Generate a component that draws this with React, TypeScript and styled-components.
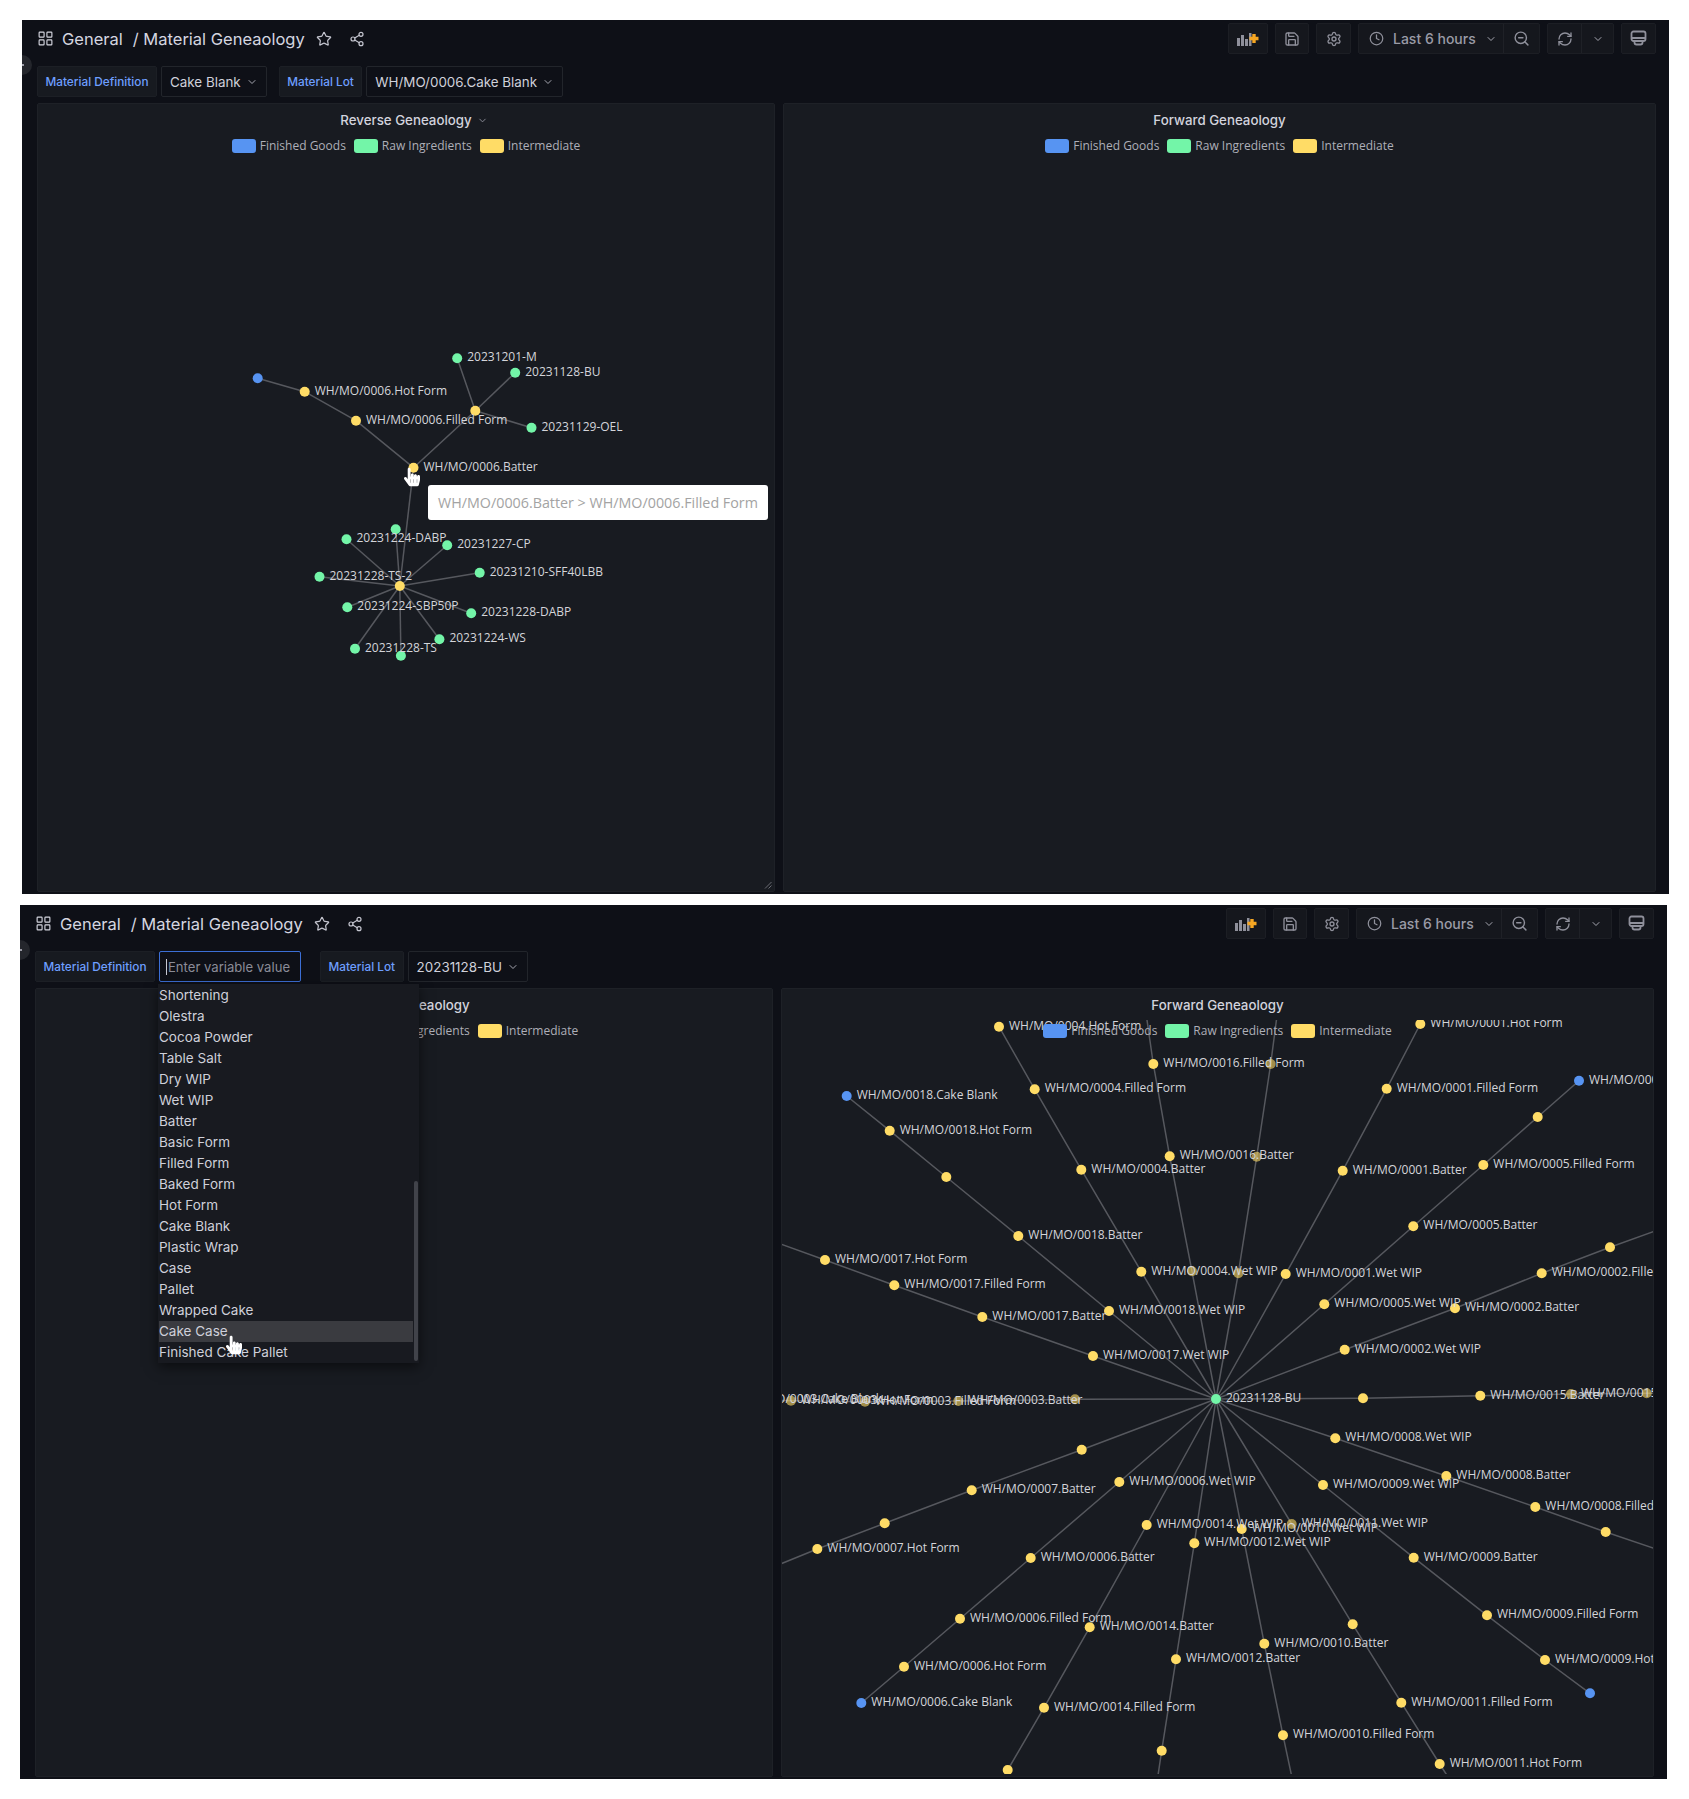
import React from 'react';
import styled, { createGlobalStyle } from 'styled-components';
import {
  ChevronDown,
  Clock,
  LayoutGrid,
  RefreshCw,
  Save,
  Settings,
  Share2,
  Star,
  ZoomOut,
} from 'lucide-react';
import { FaHandPointer } from 'react-icons/fa';

const GlobalStyle = createGlobalStyle`
  html, body {
    margin: 0;
    background: #ffffff;
  }

  body {
    font-family: Inter, "Liberation Sans", sans-serif;
  }
`;

const Page = styled.div`
  display: flex;
  flex-direction: column;
  gap: 11px;
  width: 1689px;
  height: 1799px;
  padding-top: 20px;
  box-sizing: border-box;
`;

const Frame = styled.div<{ $left: number }>`
  position: relative;
  overflow: hidden;
  display: flex;
  flex-direction: column;
  box-sizing: border-box;
  width: 1647px;
  height: 874px;
  margin-left: ${({ $left }) => $left}px;
  padding: 3px 13px 2px 15px;
  background: #0e1017;
`;

const SideToggle = styled.div`
  position: absolute;
  left: -10px;
  top: 35px;
  width: 20px;
  height: 20px;
  border-radius: 50%;
  background: #24262c;

  &::after {
    content: '';
    position: absolute;
    left: 10px;
    top: 9px;
    width: 2px;
    height: 2px;
    background: #9a9aa5;
  }
`;

const TopBar = styled.div`
  display: flex;
  align-items: center;
  justify-content: space-between;
  height: 31px;
`;

const Breadcrumb = styled.div`
  display: flex;
  align-items: center;
  color: #d5d6e0;
  font-size: 16.5px;
  font-weight: 400;
`;

const Crumb = styled.span`
  margin-left: 8px;
`;

const CrumbTail = styled.span`
  margin: 0 11px 0 10px;
`;

const TitleAction = styled.span`
  display: flex;
  margin-right: 17px;
  color: #c4c5cf;
`;

const Toolbar = styled.div`
  display: flex;
  gap: 7px;
`;

const ToolGroup = styled.div`
  display: flex;
  height: 31px;
  box-sizing: border-box;
  border: 1px solid #1c1e24;
  border-radius: 2px;
  background: #15171d;
`;

const ToolCell = styled.div<{ $width: number; $divided?: boolean }>`
  display: flex;
  align-items: center;
  justify-content: center;
  width: ${({ $width }) => $width}px;
  color: #8f909b;
  border-left: ${({ $divided }) => ($divided ? '1px solid #1f2127' : '0')};
`;

const TimeCell = styled(ToolCell)`
  justify-content: flex-start;
  box-sizing: border-box;
  padding-left: 10px;
`;

const TimeText = styled.span`
  margin: 0 9px 0 9px;
  color: #9a9ba6;
  font-size: 14px;
  font-weight: 500;
`;

const VariableRow = styled.div`
  display: flex;
  align-items: stretch;
  height: 31px;
  margin-top: 12px;
`;

const VariableLabel = styled.div<{ $gapLeft: number }>`
  display: flex;
  align-items: center;
  box-sizing: border-box;
  margin-left: ${({ $gapLeft }) => $gapLeft}px;
  padding: 0 7.5px;
  border: 1px solid #1c1f25;
  border-radius: 2px;
  background: #171a20;
  color: #6e9fff;
  font-size: 11.8px;
  font-weight: 500;
`;

const VariableValue = styled.div`
  display: flex;
  align-items: center;
  gap: 5px;
  box-sizing: border-box;
  margin-left: 4px;
  padding: 0 8px 0 8px;
  border: 1px solid #22252b;
  border-radius: 2px;
  background: #0e1017;
  color: #d0d1db;
  font-size: 13.4px;
`;

const Chevron = styled(ChevronDown)`
  flex: none;
  color: #a5a6b0;
`;

const VariableInputWrap = styled.div`
  position: relative;
  margin-left: 4px;
`;

const VariableInput = styled.input`
  display: block;
  box-sizing: border-box;
  width: 142px;
  height: 31px;
  padding: 0 0 0 8px;
  border: 1px solid #3c6fd6;
  border-radius: 2px;
  outline: none;
  background: #0e1017;
  color: #d0d1db;
  font: 13.1px Inter, sans-serif;

  &::placeholder {
    color: #8b8c97;
    opacity: 1;
  }
`;

const Caret = styled.span`
  position: absolute;
  left: 7px;
  top: 8px;
  width: 1px;
  height: 16px;
  background: #c8c9d3;
`;

const OptionList = styled.ul`
  position: absolute;
  z-index: 5;
  left: -1px;
  top: 33px;
  width: 261px;
  height: 379px;
  margin: 0;
  padding: 0.5px 0 0 1px;
  box-sizing: border-box;
  list-style: none;
  background: #181a20;
  box-shadow: 0 4px 12px rgba(0, 0, 0, 0.55);
`;

const Option = styled.li<{ $active?: boolean }>`
  width: 254px;
  height: 21px;
  line-height: 21px;
  color: #cfd0da;
  font-size: 13.5px;
  background: ${({ $active }) => ($active ? '#3a3b40' : 'transparent')};
`;

const ScrollThumb = styled.span`
  position: absolute;
  right: 1px;
  bottom: 2px;
  width: 4px;
  height: 180px;
  border-radius: 2px;
  background: #41434a;
`;

const Pointer = styled(FaHandPointer)<{ $left: number; $top: number }>`
  position: absolute;
  z-index: 6;
  left: ${({ $left }) => $left}px;
  top: ${({ $top }) => $top}px;
  width: 16px;
  height: 22px;
  color: #ffffff;
`;

const Panels = styled.div`
  display: grid;
  flex: 1;
  grid-template-columns: 738px 873px;
  gap: 8px;
  margin-top: 6px;
  min-height: 0;
`;

const Panel = styled.section`
  position: relative;
  overflow: hidden;
  border: 1px solid #1e2127;
  border-radius: 2px;
  background: #181b21;
`;

const PanelHead = styled.header`
  position: relative;
  z-index: 2;
  display: flex;
  flex-direction: column;
  align-items: center;
  padding-top: 7.5px;
`;

const PanelTitle = styled.h3`
  position: relative;
  margin: 0;
  color: #d2d3dd;
  font-size: 13.3px;
  font-weight: 500;
  line-height: 17px;
`;

const TitleChevron = styled(ChevronDown)`
  position: absolute;
  left: calc(100% + 5px);
  top: 3px;
  color: #8f909b;
`;

const Legend = styled.ul`
  display: flex;
  align-items: center;
  margin: 8.5px 0 0;
  padding: 0;
  list-style: none;
`;

const LegendItem = styled.li`
  display: flex;
  align-items: center;
  gap: 4px;
  margin: 0 4px;
  color: #aeafb8;
  font-family: 'Open Sans', sans-serif;
  font-size: 12px;
`;

const Swatch = styled.span<{ $color: string }>`
  width: 24px;
  height: 14px;
  border-radius: 3px;
  background: ${({ $color }) => $color};
`;

const GraphCanvas = styled.svg`
  position: absolute;
  left: 0;
  top: 31px;
  width: 100%;
  height: calc(100% - 33px);
`;

const Edge = styled.polyline`
  fill: none;
  stroke: #56585e;
  stroke-width: 1.5;
`;

const NodeDot = styled.circle<{ $kind: NodeKind }>`
  fill: ${({ $kind }) => NODE_COLORS[$kind]};
  opacity: ${({ $kind }) => ($kind === 'ghost' ? 0.6 : 1)};
`;

const NodeLabel = styled.text`
  fill: #d4d5da;
  font-family: 'Open Sans', sans-serif;
  font-size: 12px;
  dominant-baseline: central;
`;

const Tooltip = styled.div`
  position: absolute;
  z-index: 3;
  left: 390px;
  top: 381px;
  display: flex;
  align-items: center;
  box-sizing: border-box;
  width: 340px;
  height: 35px;
  padding-left: 10px;
  border-radius: 3px;
  background: #ffffff;
  color: #a3a3a3;
  font-family: 'Open Sans', sans-serif;
  font-size: 14.3px;
  white-space: nowrap;
`;

const ResizeMark = styled.svg`
  position: absolute;
  right: 2px;
  bottom: 2px;
  color: #6b6d75;
`;

type NodeKind = 'yellow' | 'green' | 'blue' | 'ghost' | 'none';

const NODE_COLORS: Record<NodeKind, string> = {
  yellow: '#ffdc66',
  green: '#73f5a8',
  blue: '#5794f2',
  ghost: '#ffdc66',
  none: 'transparent',
};

type GraphNode = { x: number; y: number; label?: string; kind: NodeKind };

const at = (x: number, y: number, label?: string, kind: NodeKind = 'yellow'): GraphNode => ({
  x,
  y,
  label,
  kind,
});
const end = (x: number, y: number) => at(x, y, undefined, 'none');
const ghost = (x: number, y: number, label?: string) => at(x, y, label, 'ghost');
const raw = (x: number, y: number, label?: string) => at(x, y, label, 'green');
const blue = (x: number, y: number, label?: string) => at(x, y, label, 'blue');

const MO = 'WH/MO/';

const REVERSE_BATTER = at(413.5, 467.7, `${MO}0006.Batter`);
const REVERSE_MIX = at(475.3, 410.7);
const REVERSE_WIP = at(399.8, 586);

const REVERSE_CHAINS: GraphNode[][] = [
  [
    REVERSE_BATTER,
    at(356, 420.7, `${MO}0006.Filled Form`),
    at(304.7, 391.7, `${MO}0006.Hot Form`),
    blue(257.7, 378.3),
  ],
  [REVERSE_BATTER, REVERSE_MIX, raw(457.2, 358.3, '20231201-M')],
  [REVERSE_MIX, raw(515.2, 372.7, '20231128-BU')],
  [REVERSE_MIX, raw(531.5, 427.7, '20231129-OEL')],
  [REVERSE_BATTER, REVERSE_WIP],
  [REVERSE_WIP, raw(395.7, 529.3)],
  [REVERSE_WIP, raw(346.5, 539.3, '20231224-DABP')],
  [REVERSE_WIP, raw(447.2, 545.3, '20231227-CP')],
  [REVERSE_WIP, raw(319.5, 576.7, '20231228-TS-2')],
  [REVERSE_WIP, raw(479.7, 572.7, '20231210-SFF40LBB')],
  [REVERSE_WIP, raw(347.3, 607.3, '20231224-SBP50P')],
  [REVERSE_WIP, raw(471.2, 613.3, '20231228-DABP')],
  [REVERSE_WIP, raw(439.4, 639.3, '20231224-WS')],
  [REVERSE_WIP, raw(355, 648.7, '20231228-TS')],
  [REVERSE_WIP, raw(400.9, 655.7)],
];

const HUB = raw(1216, 1399, '20231128-BU');

const FORWARD_CHAINS: GraphNode[][] = [
  [
    HUB,
    at(1141.3, 1271.7, `${MO}0004.Wet WIP`),
    at(1081.3, 1169.7, `${MO}0004.Batter`),
    at(1034.7, 1089.3, `${MO}0004.Filled Form`),
    at(999, 1026.7, `${MO}0004.Hot Form`),
  ],
  [
    HUB,
    ghost(1192, 1271.3),
    at(1169.7, 1156.3, `${MO}0016.Batter`),
    at(1153.3, 1064, `${MO}0016.Filled Form`),
    end(1146.7, 1018),
  ],
  [
    HUB,
    ghost(1238.3, 1273.3),
    ghost(1256.7, 1156.7),
    ghost(1270.7, 1064),
    end(1276.7, 1018),
  ],
  [
    HUB,
    at(1285.7, 1274, `${MO}0001.Wet WIP`),
    at(1342.7, 1170.7, `${MO}0001.Batter`),
    at(1386.7, 1088.7, `${MO}0001.Filled Form`),
    at(1420.3, 1024, `${MO}0001.Hot Form`),
  ],
  [
    HUB,
    at(1324.3, 1304.3, `${MO}0005.Wet WIP`),
    at(1413.3, 1226.3, `${MO}0005.Batter`),
    at(1483.3, 1165, `${MO}0005.Filled Form`),
    at(1537.7, 1117),
    blue(1579, 1080.7, `${MO}0005.Cake Blank`),
  ],
  [
    HUB,
    at(1344.7, 1349.7, `${MO}0002.Wet WIP`),
    at(1455, 1308.3, `${MO}0002.Batter`),
    at(1541.7, 1273.3, `${MO}0002.Filled Form`),
    at(1610, 1247.3),
    end(1656, 1230.7),
  ],
  [
    HUB,
    at(1363, 1398.3),
    at(1480.3, 1395.7, `${MO}0015.Batter`),
    ghost(1571, 1394, `${MO}0015.Filled Form`),
    ghost(1646.7, 1393.3),
    end(1660, 1393),
  ],
  [
    HUB,
    at(1335.3, 1438.3, `${MO}0008.Wet WIP`),
    at(1446.3, 1476, `${MO}0008.Batter`),
    at(1535.3, 1507, `${MO}0008.Filled Form`),
    at(1605.7, 1532),
    end(1656, 1549),
  ],
  [
    HUB,
    at(1323, 1485, `${MO}0009.Wet WIP`),
    at(1413.7, 1557.7, `${MO}0009.Batter`),
    at(1487, 1615.3, `${MO}0009.Filled Form`),
    at(1545, 1660, `${MO}0009.Hot Form`),
    blue(1590, 1693.3),
  ],
  [
    HUB,
    ghost(1291.7, 1524, `${MO}0011.Wet WIP`),
    at(1352.7, 1624.3),
    at(1401.3, 1702.7, `${MO}0011.Filled Form`),
    at(1439.7, 1764, `${MO}0011.Hot Form`),
    end(1450, 1780),
  ],
  [
    HUB,
    at(1241.7, 1529, `${MO}0010.Wet WIP`),
    at(1264.3, 1643.7, `${MO}0010.Batter`),
    at(1283, 1735.3, `${MO}0010.Filled Form`),
    end(1292.5, 1780),
  ],
  [
    HUB,
    at(1194.3, 1543.3, `${MO}0012.Wet WIP`),
    at(1176, 1659.3, `${MO}0012.Batter`),
    at(1161.7, 1750.7),
    end(1157.3, 1780),
  ],
  [
    HUB,
    at(1146.7, 1525, `${MO}0014.Wet WIP`),
    at(1089.7, 1627.3, `${MO}0014.Batter`),
    at(1044, 1707.7, `${MO}0014.Filled Form`),
    at(1007.7, 1770),
    end(1001, 1780),
  ],
  [
    HUB,
    at(1119.3, 1482, `${MO}0006.Wet WIP`),
    at(1030.7, 1558, `${MO}0006.Batter`),
    at(960, 1618.7, `${MO}0006.Filled Form`),
    at(904, 1666.7, `${MO}0006.Hot Form`),
    blue(861.3, 1703, `${MO}0006.Cake Blank`),
  ],
  [
    HUB,
    at(1081.7, 1449.7),
    at(971.7, 1490.3, `${MO}0007.Batter`),
    at(884.7, 1523.3),
    at(817.3, 1549, `${MO}0007.Hot Form`),
    end(778, 1565),
  ],
  [
    HUB,
    ghost(1075, 1399.3),
    ghost(958.3, 1401, `${MO}0003.Batter`),
    ghost(865, 1401.7, `${MO}0003.Filled Form`),
    ghost(791, 1400.7, `${MO}0003.Hot Form`),
    at(731, 1400, `${MO}0003.Cake Blank`),
  ],
  [
    HUB,
    at(1093, 1356, `${MO}0017.Wet WIP`),
    at(982.3, 1317, `${MO}0017.Batter`),
    at(894.3, 1285.3, `${MO}0017.Filled Form`),
    at(825, 1260, `${MO}0017.Hot Form`),
    end(778, 1243),
  ],
  [
    HUB,
    at(1109, 1311, `${MO}0018.Wet WIP`),
    at(1018.3, 1236, `${MO}0018.Batter`),
    at(946.3, 1177),
    at(889.7, 1130.7, `${MO}0018.Hot Form`),
    blue(846.7, 1096, `${MO}0018.Cake Blank`),
  ],
];

const Graph = ({
  chains,
  originX,
  originY,
}: {
  chains: GraphNode[][];
  originX: number;
  originY: number;
}) => {
  const nodes = Array.from(new Set(chains.flat()));
  return (
    <GraphCanvas>
      <g transform={`translate(${-originX} ${-originY})`}>
        {chains.map((chain, i) => (
          <Edge key={i} points={chain.map((p) => `${p.x},${p.y}`).join(' ')} />
        ))}
        {nodes.map((node, i) => (
          <NodeDot key={i} cx={node.x} cy={node.y} r={5} $kind={node.kind} />
        ))}
        {nodes.map((node, i) =>
          node.label ? (
            <NodeLabel key={i} x={node.x + 10} y={node.y - 1.5}>
              {node.label}
            </NodeLabel>
          ) : null,
        )}
      </g>
    </GraphCanvas>
  );
};

const PanelHeader = ({ title, menu }: { title: string; menu?: boolean }) => (
  <PanelHead>
    <PanelTitle>
      {title}
      {menu && <TitleChevron size={11} />}
    </PanelTitle>
    <Legend>
      <LegendItem>
        <Swatch $color="#5794f2" />
        Finished Goods
      </LegendItem>
      <LegendItem>
        <Swatch $color="#73f5a8" />
        Raw Ingredients
      </LegendItem>
      <LegendItem>
        <Swatch $color="#ffdc66" />
        Intermediate
      </LegendItem>
    </Legend>
  </PanelHead>
);

const AddPanelIcon = () => (
  <svg width="22" height="14" viewBox="0 0 22 14">
    <g fill="#8f909b">
      <rect x="0" y="6" width="3" height="8" />
      <rect x="4" y="3" width="3" height="11" />
      <rect x="8" y="7" width="3" height="7" />
      <rect x="12" y="1" width="2.5" height="13" />
    </g>
    <path d="M17 2v9M12.5 6.5h9" stroke="#f5a623" strokeWidth="3.4" />
  </svg>
);

const KioskIcon = () => (
  <svg width="17" height="17" viewBox="0 0 17 17" fill="none" stroke="currentColor" strokeWidth="1.8">
    <rect x="1.5" y="1.5" width="14" height="9.5" rx="2" />
    <path d="M1.5 8h14M4.5 11v1.5a2 2 0 0 0 2 2h4a2 2 0 0 0 2-2V11" />
  </svg>
);

const TopBarRow = () => (
  <TopBar>
    <Breadcrumb>
      <LayoutGrid size={17} strokeWidth={1.6} />
      <Crumb>General</Crumb>
      <CrumbTail>/ Material Geneaology</CrumbTail>
      <TitleAction>
        <Star size={16} strokeWidth={1.8} />
      </TitleAction>
      <TitleAction>
        <Share2 size={16} strokeWidth={1.8} />
      </TitleAction>
    </Breadcrumb>
    <Toolbar>
      <ToolGroup>
        <ToolCell $width={38}>
          <AddPanelIcon />
        </ToolCell>
      </ToolGroup>
      <ToolGroup>
        <ToolCell $width={32}>
          <Save size={16} />
        </ToolCell>
      </ToolGroup>
      <ToolGroup>
        <ToolCell $width={33}>
          <Settings size={16} />
        </ToolCell>
      </ToolGroup>
      <ToolGroup>
        <TimeCell $width={144}>
          <Clock size={15} />
          <TimeText>Last 6 hours</TimeText>
          <Chevron size={12} />
        </TimeCell>
        <ToolCell $width={35} $divided>
          <ZoomOut size={17} />
        </ToolCell>
      </ToolGroup>
      <ToolGroup>
        <ToolCell $width={33}>
          <RefreshCw size={16} />
        </ToolCell>
        <ToolCell $width={31} $divided>
          <Chevron size={12} />
        </ToolCell>
      </ToolGroup>
      <ToolGroup>
        <ToolCell $width={33}>
          <KioskIcon />
        </ToolCell>
      </ToolGroup>
    </Toolbar>
  </TopBar>
);

const MATERIALS = [
  'Shortening',
  'Olestra',
  'Cocoa Powder',
  'Table Salt',
  'Dry WIP',
  'Wet WIP',
  'Batter',
  'Basic Form',
  'Filled Form',
  'Baked Form',
  'Hot Form',
  'Cake Blank',
  'Plastic Wrap',
  'Case',
  'Pallet',
  'Wrapped Cake',
  'Cake Case',
  'Finished Cake Pallet',
];

const App = () => (
  <>
    <GlobalStyle />
    <Page>
      <Frame $left={22}>
        <SideToggle />
        <TopBarRow />
        <VariableRow>
          <VariableLabel $gapLeft={0}>Material Definition</VariableLabel>
          <VariableValue>
            Cake Blank
            <Chevron size={12} />
          </VariableValue>
          <VariableLabel $gapLeft={12}>Material Lot</VariableLabel>
          <VariableValue>
            WH/MO/0006.Cake Blank
            <Chevron size={12} />
          </VariableValue>
        </VariableRow>
        <Panels>
          <Panel>
            <PanelHeader title="Reverse Geneaology" menu />
            <Graph chains={REVERSE_CHAINS} originX={38} originY={135} />
            <Tooltip>WH/MO/0006.Batter &gt; WH/MO/0006.Filled Form</Tooltip>
            <Pointer $left={366} $top={362} />
            <ResizeMark width="8" height="8" viewBox="0 0 8 8">
              <path d="M7.5 1L1 7.5M7.5 4.5L4.5 7.5" stroke="currentColor" fill="none" />
            </ResizeMark>
          </Panel>
          <Panel>
            <PanelHeader title="Forward Geneaology" />
          </Panel>
        </Panels>
      </Frame>
      <Frame $left={20}>
        <SideToggle />
        <TopBarRow />
        <VariableRow>
          <VariableLabel $gapLeft={0}>Material Definition</VariableLabel>
          <VariableInputWrap>
            <VariableInput placeholder="Enter variable value" />
            <Caret />
            <OptionList>
              {MATERIALS.map((name) => (
                <Option key={name} $active={name === 'Cake Case'}>
                  {name}
                </Option>
              ))}
              <ScrollThumb />
              <Pointer $left={68} $top={350} />
            </OptionList>
          </VariableInputWrap>
          <VariableLabel $gapLeft={19}>Material Lot</VariableLabel>
          <VariableValue>
            20231128-BU
            <Chevron size={12} />
          </VariableValue>
        </VariableRow>
        <Panels>
          <Panel>
            <PanelHeader title="Reverse Geneaology" />
          </Panel>
          <Panel>
            <PanelHeader title="Forward Geneaology" />
            <Graph chains={FORWARD_CHAINS} originX={782} originY={1020} />
          </Panel>
        </Panels>
      </Frame>
    </Page>
  </>
);

export default App;
